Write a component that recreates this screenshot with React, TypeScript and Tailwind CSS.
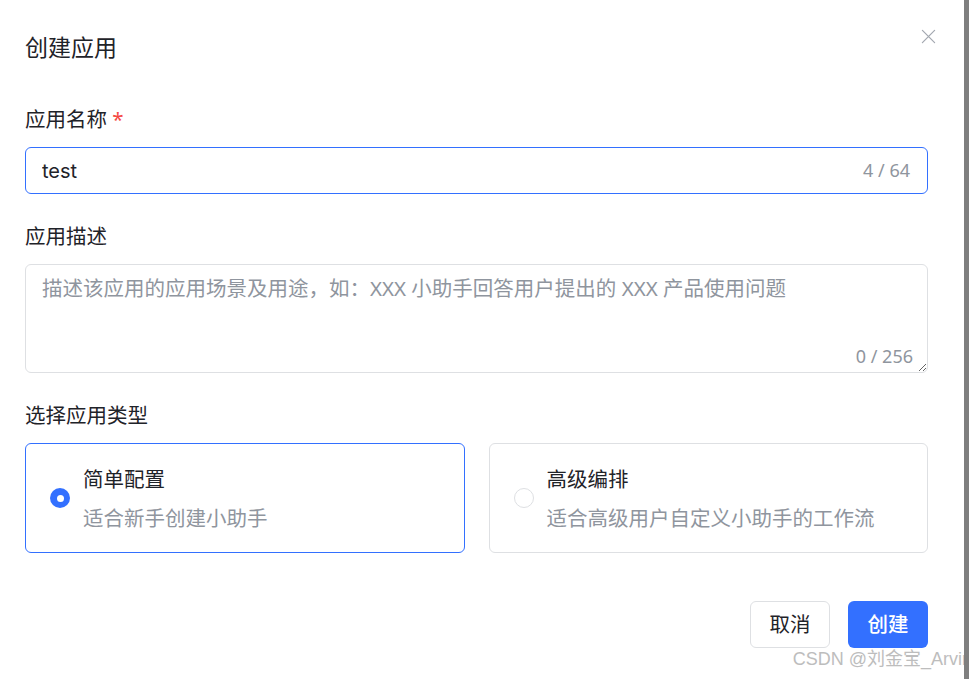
import React from 'react'

const font = { fontFamily: '"Noto Sans", "Noto Sans CJK SC", sans-serif' }

type Option = { title: string; desc: string; selected: boolean }

const options: Option[] = [
  { title: '简单配置', desc: '适合新手创建小助手', selected: true },
  { title: '高级编排', desc: '适合高级用户自定义小助手的工作流', selected: false },
]

const Radio = ({ checked }: { checked: boolean }) =>
  checked ? (
    <span className="flex h-[20px] w-[20px] shrink-0 items-center justify-center rounded-full bg-[#3370ff]">
      <span className="h-[7px] w-[7px] rounded-full bg-white" />
    </span>
  ) : (
    <span className="h-[20px] w-[20px] shrink-0 rounded-full border border-[#dee0e3] bg-white" />
  )

const App = () => {
  return (
    <div className="flex h-[679px] w-full overflow-hidden bg-white text-[#1f2329]" style={font}>
      <div className="relative flex flex-1 flex-col pl-[25px] pr-[36px]">
        {/* Header */}
        <div className="mt-[33px] flex items-start justify-between">
          <h1 className="text-[23px] font-normal leading-[28px]">创建应用</h1>
          <button className="-mt-[9px] mr-[-12px] flex h-[24px] w-[24px] items-center justify-center text-[#a3a8b0]">
            <svg width="15" height="15" viewBox="0 0 16 16" fill="none" stroke="currentColor" strokeWidth="1.3" strokeLinecap="round">
              <path d="M1.5 1.5 14.5 14.5M14.5 1.5 1.5 14.5" />
            </svg>
          </button>
        </div>

        {/* Name */}
        <label className="mt-[44px] text-[20.5px] leading-[28px]">
          应用名称 <span className="text-[#f54a45]">*</span>
        </label>
        <div className="mt-[14px] flex h-[47px] items-center rounded-[6px] border border-[#3370ff] pl-[16px] pr-[17px]">
          <input
            readOnly
            value="test"
            className="min-w-0 flex-1 bg-transparent text-[20px] text-[#1f2329] outline-none"
            style={{ fontFamily: '"Inter", "Noto Sans CJK SC", sans-serif' }}
          />
          <span className="text-[18px] text-[#8f959e]">4 / 64</span>
        </div>

        {/* Description */}
        <label className="mt-[28px] text-[20.5px] leading-[28px]">应用描述</label>
        <div className="relative mt-[14px]">
          <textarea
            className="block h-[109px] w-full resize-y rounded-[6px] border border-[#dee0e3] px-[16px] py-[9px] text-[20.5px] leading-[28px] outline-none placeholder:text-[#8f959e]"
            placeholder="描述该应用的应用场景及用途，如：XXX 小助手回答用户提出的 XXX 产品使用问题"
          />
          <span className="pointer-events-none absolute bottom-[5px] right-[15px] text-[18px] leading-[24px] text-[#8f959e]">
            0 / 256
          </span>
        </div>

        {/* Type */}
        <label className="mt-[28px] text-[20.5px] leading-[28px]">选择应用类型</label>
        <div className="mt-[14px] grid grid-cols-2 gap-[24px]">
          {options.map((o) => (
            <div
              key={o.title}
              className={`flex h-[110px] items-center gap-[13px] rounded-[6px] border pl-[24px] ${
                o.selected ? 'border-[#3370ff]' : 'border-[#dee0e3]'
              }`}
            >
              <Radio checked={o.selected} />
              <div className="flex flex-col gap-[11px]">
                <span className="text-[20.5px] leading-[28px]">{o.title}</span>
                <span className="text-[20.5px] leading-[28px] text-[#8f959e]">{o.desc}</span>
              </div>
            </div>
          ))}
        </div>

        {/* Footer */}
        <div className="mt-[48px] flex justify-end gap-[18px]">
          <button className="h-[47px] w-[80px] rounded-[6px] border border-[#dee0e3] bg-white text-[20.5px] text-[#1f2329]">
            取消
          </button>
          <button className="h-[47px] w-[80px] rounded-[6px] bg-[#3370ff] text-[20.5px] font-medium text-white">
            创建
          </button>
        </div>

        <span
          className="pointer-events-none absolute bottom-[6px] right-[-8px] whitespace-nowrap text-[18px] text-[#bdbdbd]"
          style={{ fontFamily: '"Liberation Sans", "Noto Sans CJK SC", sans-serif' }}
        >
          CSDN @刘金宝_Arvin
        </span>
      </div>
      <div className="z-10 w-[5px] shrink-0 bg-[#7f7f7f]" />
    </div>
  )
}

export default App
